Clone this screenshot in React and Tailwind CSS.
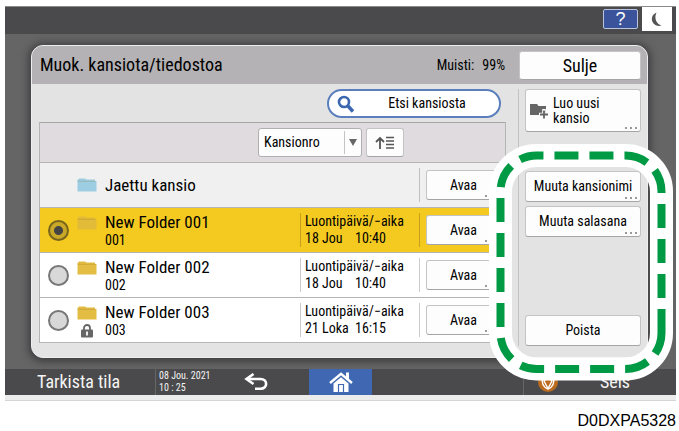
import React, { useState } from 'react';
import clsx from 'clsx';

const folders = [
  { id: 'shared', name: 'Jaettu kansio', shared: true },
  { id: '001', name: 'New Folder 001', date: '18 Jou', time: '10:40' },
  { id: '002', name: 'New Folder 002', date: '18 Jou', time: '10:40' },
  { id: '003', name: 'New Folder 003', date: '21 Loka', time: '16:15', locked: true },
];

const FolderIcon = ({ className }) => (
  <svg viewBox="0 0 19 14" className={clsx('w-5 h-[14px] shrink-0', className)} fill="currentColor">
    <path d="M0 2 L1.5 0.5 H7.5 L9 1.5 H17.5 V3 H19 V13.5 H0 Z" />
    <path d="M0 3.3 H18" stroke="#8a6d10" strokeOpacity="0.3" strokeWidth="0.8" />
  </svg>
);

const LockIcon = () => (
  <svg viewBox="0 0 12 14" className="w-3 h-[14px]">
    <path d="M3 6 V4 a3 3 0 0 1 6 0 V6" fill="none" stroke="#666" strokeWidth="1.8" />
    <rect x="0" y="5.5" width="12" height="8" rx="1" fill="#666" />
    <path d="M6 7.5 V11.5" stroke="#fff" strokeWidth="1.8" />
  </svg>
);

const Dots = () => (
  <span className="absolute right-[3px] bottom-[2px] flex gap-[3px]">
    <span className="w-[2px] h-[2px] bg-[#999]" />
    <span className="w-[2px] h-[2px] bg-[#999]" />
    <span className="w-[2px] h-[2px] bg-[#999]" />
  </span>
);

const PanelButton = ({ className, dots, children }) => (
  <button
    className={clsx(
      'relative flex items-center bg-[#fdfdfd] border border-[#c4c4c4] border-b-[#a5a5a5] rounded-[3px] text-black',
      className
    )}
  >
    {children}
    {dots && <Dots />}
  </button>
);

const FolderRow = ({ folder, selected, onSelect }) => (
  <li
    className={clsx(
      'flex items-center h-[45px] border-t border-[#b5b5b5] pl-2',
      folder.shared ? 'bg-[#f0f0f0]' : selected ? 'bg-[#f4ca21]' : 'bg-white'
    )}
  >
    <label className="flex flex-1 items-center h-full">
      <span className="w-[29px] flex items-center">
        {!folder.shared && (
          <input
            type="radio"
            name="folder"
            checked={selected}
            onChange={() => onSelect(folder.id)}
            className={clsx(
              'appearance-none w-[21px] h-[21px] rounded-full border-2',
              selected
                ? 'border-[#77651c] bg-[radial-gradient(circle,#444_0_4px,#c9a727_5px)]'
                : 'border-[#777] bg-[#d8d8d8]'
            )}
          />
        )}
      </span>
      <span className="w-7 h-full flex flex-col items-center pr-2 pt-2">
        <FolderIcon
          className={clsx(
            folder.shared ? 'mt-[7px] text-[#9dcde2]' : selected ? 'text-[#e2bb38]' : 'text-[#e3bc43]'
          )}
        />
        {folder.locked && <span className="mt-1"><LockIcon /></span>}
      </span>
      <span className="flex flex-col">
        <span className="text-[17px] leading-5">{folder.name}</span>
        {!folder.shared && <span className="text-[14px] leading-4">{folder.id}</span>}
      </span>
    </label>
    {folder.date && (
      <div className="w-[119px] h-[34px] pl-1 border-l border-black/20 text-[14px] leading-[17px]">
        <p>Luontipäivä/−aika</p>
        <p className="flex">
          <span className="w-[50px]">{folder.date}</span>
          <span>{folder.time}</span>
        </p>
      </div>
    )}
    <div className="h-[34px] pl-[6px] pr-1 border-l border-black/20 flex items-center">
      <PanelButton dots className="justify-center w-[75px] h-[30px] text-[14px]">Avaa</PanelButton>
    </div>
  </li>
);

// Dashed frame around the folder actions
const Highlight = () => (
  <svg
    viewBox="489 144 185 238"
    className="absolute right-[2px] top-[138px] w-[185px] h-[238px] pointer-events-none"
    fill="none"
  >
    <rect x="500.5" y="155.5" width="161" height="213.5" rx="36" stroke="#fff" strokeWidth="23" />
    <path
      d="M661.5 333 V191.5 A36 36 0 0 0 625.5 155.5 H536.5 A36 36 0 0 0 500.5 191.5 V333 A36 36 0 0 0 536.5 369 H625.5 A36 36 0 0 0 661.5 333 Z"
      stroke="#009944"
      strokeWidth="8"
      strokeDasharray="24 11"
    />
  </svg>
);

const App = () => {
  const [selectedId, setSelectedId] = useState('001');

  return (
    <div className="pl-[5px] pr-[3px] pt-[6px] min-h-screen bg-white font-['Roboto_Condensed','Open_Sans',sans-serif] text-black">
      <div className="relative bg-[#656565]">
        {/* Top bar */}
        <header className="h-7 bg-[#4a4a4c] border-t border-[#8a8a8a] flex items-start justify-end gap-1 pr-1">
          <button
            aria-label="Ohje"
            className="mt-[2px] w-[35px] h-5 bg-[#3a539b] border border-[#b9c3df] rounded-[2px] text-white font-['Liberation_Sans'] text-[18px] leading-[18px]"
          >
            ?
          </button>
          <button aria-label="Lepotila" className="w-[30px] h-6 bg-white flex items-center justify-center">
            <svg viewBox="0 0 12 15" className="w-3 h-[15px]" fill="#555">
              <path d="M5.5 0.5 C2 2 0.4 5 1 8.3 C1.8 12.5 6 15 10.5 13.6 C5.5 12 2.8 6.5 5.5 0.5 Z" />
            </svg>
          </button>
        </header>

        {/* Folder panel */}
        <main className="mt-[11px] ml-[26px] mr-[28px] rounded-xl border border-[#eee] bg-[#e3e3e3] overflow-hidden shadow-[0_1px_7px_3px_rgba(35,35,40,0.55)]">
          <div className="h-[38px] bg-[#b4b2b4] flex items-center pl-2 pr-[6px]">
            <h1 className="flex-1 text-[18px] leading-6">Muok. kansiota/tiedostoa</h1>
            <p className="flex gap-2 text-[14px] pr-[14px]">
              <span>Muisti:</span>
              <span>99%</span>
            </p>
            <PanelButton className="justify-center w-[122px] h-[29px] text-[18px]">Sulje</PanelButton>
          </div>

          <div className="flex pt-[5px] pl-[7px] pr-[6px] pb-[11px]">
            <section className="flex-1 flex flex-col pb-[3px]">
              <button className="self-end mr-[5px] w-[174px] h-[29px] rounded-full bg-white border-2 border-[#5b7fbd] flex items-center pl-2 text-[14px]">
                <svg viewBox="0 0 18 18" className="w-[18px] h-[18px]" fill="none" stroke="#3b66b0">
                  <circle cx="7" cy="7" r="5" strokeWidth="2.6" />
                  <path d="M11 11 L16 16.5" strokeWidth="3.4" />
                </svg>
                <span className="flex-1">Etsi kansiosta</span>
              </button>

              <div className="mt-1 border border-[#b5b5b5] border-t-[#a5a5a5]">
                <div className="h-[39px] bg-[#dfdbdf] flex items-center justify-end gap-1 pr-[101px]">
                  <div className="relative">
                    <select
                      aria-label="Lajittelu"
                      className="appearance-none w-[104px] h-[29px] bg-[#fdfdfd] border border-[#b0b0b0] rounded-[3px] px-[5px] text-[14px]"
                    >
                      <option>Kansionro</option>
                    </select>
                    <span className="absolute right-[1px] top-[3px] w-[17px] h-[23px] border-l border-[#c4c4c4] flex items-center justify-center pointer-events-none">
                      <svg viewBox="0 0 8 7" className="w-2 h-[7px]" fill="#666">
                        <path d="M0 0 H8 L4 7 Z" />
                      </svg>
                    </span>
                  </div>
                  <PanelButton className="justify-center w-[38px] h-[29px]">
                    <svg viewBox="0 0 20 14" className="w-5 h-[14px]" fill="none" stroke="#555">
                      <path d="M5 13 V2 M1 6 L5 2 L9 6" strokeWidth="1.8" />
                      <path d="M11 1.5 H19 M11 5 H19 M11 8.5 H19 M11 12 H19" strokeWidth="1.5" />
                    </svg>
                  </PanelButton>
                </div>
                <ul>
                  {folders.map((folder) => (
                    <FolderRow
                      key={folder.id}
                      folder={folder}
                      selected={folder.id === selectedId}
                      onSelect={setSelectedId}
                    />
                  ))}
                </ul>
              </div>
            </section>

            <aside className="ml-3 pl-[6px] w-[123px] border-l border-[#c2c2c2] flex flex-col">
              <PanelButton dots className="h-[43px] gap-1 pl-1 text-[14px] leading-[15px]">
                <svg viewBox="0 0 19 16" className="w-[19px] h-4 shrink-0">
                  <path d="M0 1 H7 L8.5 3 H16 V12 H0 Z" fill="#666" />
                  <path d="M14 6 V16 M9 11.5 H19" stroke="#fdfdfd" strokeWidth="3.6" />
                  <path d="M14 7.5 V15.5 M10 11.5 H18" stroke="#666" strokeWidth="1.8" />
                </svg>
                <span className="text-left">
                  Luo uusi
                  <br />
                  kansio
                </span>
              </PanelButton>
              <PanelButton dots className="justify-center mt-[39px] h-[31px] text-[14px]">Muuta kansionimi</PanelButton>
              <PanelButton dots className="justify-center mt-1 h-[31px] text-[14px]">Muuta salasana</PanelButton>
              <PanelButton className="justify-center mt-auto h-[31px] text-[14px]">Poista</PanelButton>
            </aside>
          </div>
        </main>

        {/* Bottom bar */}
        <footer className="mt-[11px] h-[26px] bg-[#4a4a4c] text-[#f4f4f4] flex items-center">
          <button className="w-[151px] h-full pl-8 text-left text-[18px] leading-6 border-r border-[#666]">Tarkista tila</button>
          <p className="w-[69px] pl-[3px] text-[10px] leading-3">
            08 Jou. 2021
            <br />
            10 : 25
          </p>
          <button aria-label="Takaisin" className="w-[84px] h-full flex items-center justify-center pr-[22px]">
            <svg viewBox="0 0 24 18" className="w-6 h-[18px]" fill="none" stroke="#fff">
              <path d="M3 6 H16.5 C24 6 24 15.8 16.5 15.8 H11" strokeWidth="2.6" />
              <path d="M9.5 1 L2.5 6 L9.5 11" strokeWidth="2.6" />
            </svg>
          </button>
          <button aria-label="Koti" className="w-[63px] h-full bg-[#4068b2] flex items-center justify-center">
            <svg viewBox="0 0 24 20" className="w-6 h-5">
              <path d="M17 0.5 H20 V8 H17 Z" fill="#fff" />
              <path d="M1 11 L12 1.8 L23 11" fill="none" stroke="#fff" strokeWidth="2.4" />
              <path d="M4.5 11.5 L12 5.3 L19.5 11.5 V20 H4.5 Z" fill="#fff" />
              <path d="M9.5 20 V12.5 H14.5 V20" fill="#fff" stroke="#4068b2" strokeWidth="1.2" />
            </svg>
          </button>
          <button className="ml-auto w-[153px] h-full pl-[14px] flex items-center text-[18px] leading-6 border-l border-[#666]">
            <svg viewBox="0 0 20 20" className="w-5 h-5" fill="none">
              <circle cx="10" cy="10" r="10" fill="#bc6c1e" />
              <path d="M10 17 C5 15 3.5 10 4.5 5 M10 17 C15 15 16.5 10 15.5 5" stroke="#fff" strokeWidth="1.4" />
              <path d="M10 16.5 L6 9 L10 5 L14 9 Z" stroke="#fff" strokeWidth="1.4" />
            </svg>
            <span className="flex-1 pr-1 text-center">Seis</span>
          </button>
        </footer>
        <Highlight />
      </div>
      <div className="h-[6px] bg-[#ececec] border-b border-[#d5d5d5]" />
      <p className="mt-[10px] text-right font-['Liberation_Sans',sans-serif] text-[16px] leading-5">D0DXPA5328</p>
    </div>
  );
};

export default App;
